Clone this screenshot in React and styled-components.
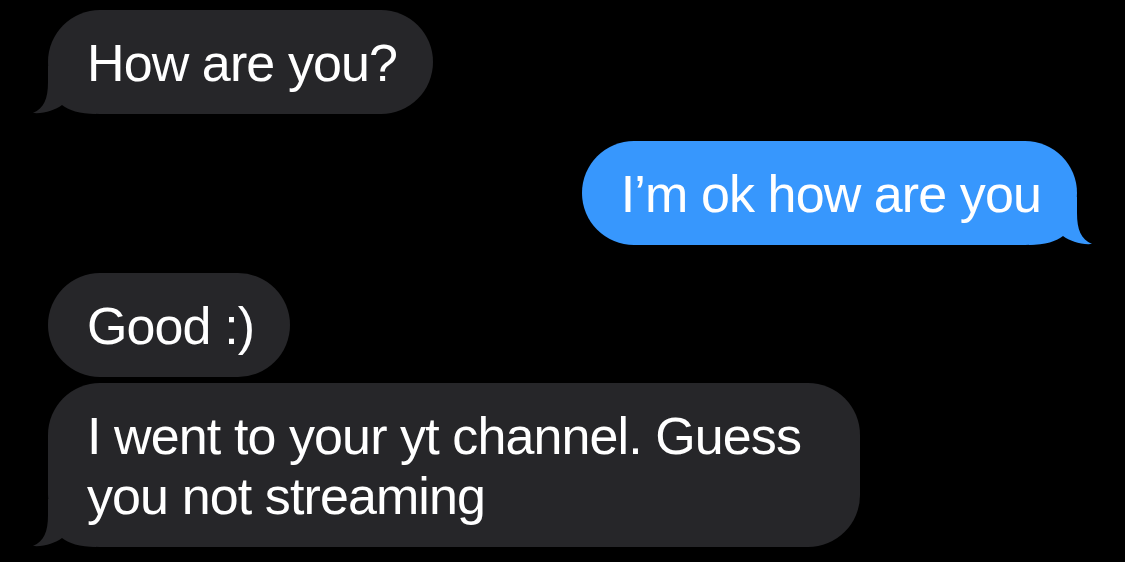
import React from "react";
import styled, { createGlobalStyle } from "styled-components";

const GlobalStyle = createGlobalStyle`
  html, body {
    margin: 0;
    padding: 0;
    background: #000;
  }
  body {
    font-family: "Liberation Sans", Arial, sans-serif;
  }
`;

const Thread = styled.div`
  display: flex;
  flex-direction: column;
  padding: 10px 48px 0 48px;
  height: 562px;
  box-sizing: border-box;
  background: #000;
  overflow: hidden;
`;

const Row = styled.div`
  display: flex;
  justify-content: ${(p) => (p.$out ? "flex-end" : "flex-start")};
  margin-top: ${(p) => p.$gap || 0}px;
`;

const Bubble = styled.div`
  position: relative;
  box-sizing: border-box;
  max-width: 812px;
  padding: 23px 36px 21px 39px;
  border-radius: 52px;
  background: ${(p) => (p.$out ? "#3797fd" : "#262629")};
  color: #fff;
  font-family: "Liberation Sans", Arial, sans-serif;
  font-size: 52px;
  letter-spacing: -0.9px;
  line-height: 60px;
`;

const Text = styled.span`
  position: relative;
  z-index: 1;
`;

const TailSvg = styled.svg`
  position: absolute;
  bottom: 0;
  width: 70px;
  height: 48px;
  ${(p) =>
    p.$out
      ? "right: -18px; transform: scaleX(-1);"
      : "left: -18px;"}
`;

function Tail({ out, color }) {
  return (
    <TailSvg $out={out} viewBox="0 0 70 48" aria-hidden="true">
      <path
        d="M18 0 L18 16 C18 33 14 42 3 47 C14 48 25 44 32 39 C38 44 50 48 66 48 L66 0 Z"
        fill={color}
      />
    </TailSvg>
  );
}

function Message({ out, tail, gap, children }) {
  return (
    <Row $out={out} $gap={gap}>
      <Bubble $out={out}>
        {tail && <Tail out={out} color={out ? "#3797fd" : "#262629"} />}
        <Text>{children}</Text>
      </Bubble>
    </Row>
  );
}

export default function App() {
  return (
    <>
      <GlobalStyle />
      <Thread>
        <Message tail>How are you?</Message>
        <Message out tail gap={27}>
          I’m ok how are you
        </Message>
        <Message gap={28}>Good :)</Message>
        <Message tail gap={6}>
          I went to your yt channel. Guess you not streaming
        </Message>
      </Thread>
    </>
  );
}
